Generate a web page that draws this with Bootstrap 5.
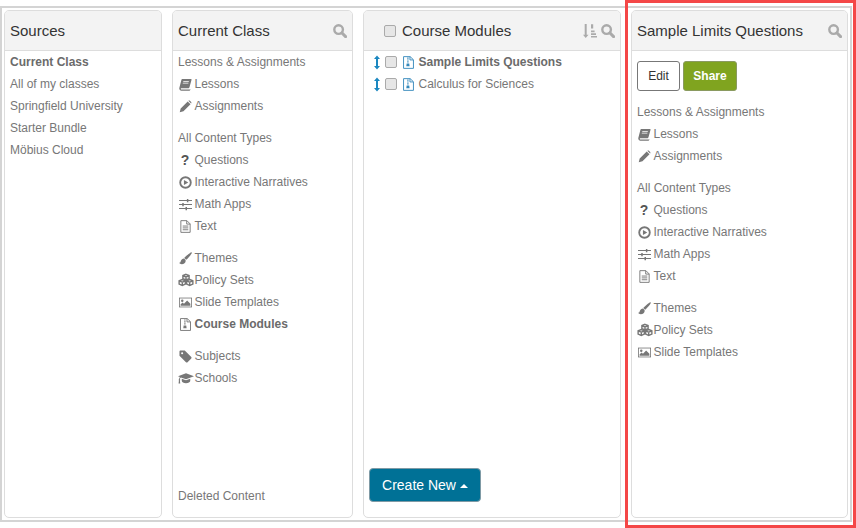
<!DOCTYPE html>
<html lang="en">
<head>
  <meta charset="UTF-8" />
  <title>Content Manager</title>
  <link href="https://cdn.jsdelivr.net/npm/bootstrap@5.3.0/dist/css/bootstrap.min.css" rel="stylesheet" />
  <style>
    html, body {
      height: 100%;
    }

    body {
      position: relative;
      background: #fff;
      font-family: "Liberation Sans", Arial, sans-serif;
      font-size: 12px;
      color: #777;
      overflow: hidden;
    }

    .frame {
      margin-top: 6px;
      width: 852px;
      height: 516px;
      border: 2px solid #d4d4d4;
      padding: 2px 1px 2px 2px;
      gap: 10px;
    }

    .pane {
      border: 1px solid #ddd;
      border-radius: 5px;
      height: 100%;
      flex: none;
    }

    .pane-sources { width: 158px; }
    .pane-class { width: 181px; }
    .pane-modules { width: 258px; }
    .pane-detail { width: 217px; }

    .pane-head {
      height: 40px;
      flex: none;
      padding: 1px 5px 0;
      background: #f3f3f3;
      border-bottom: 1px solid #ddd;
      border-radius: 4px 4px 0 0;
      font-size: 15px;
      color: #333;
    }

    .head-title {
      flex: 1;
      white-space: nowrap;
    }

    .ico-search {
      width: 14px;
      height: 14px;
      color: #aaa;
      flex: none;
    }

    .pane-body {
      flex: 1;
      padding: 0 5px;
      min-height: 0;
    }

    .nav-group {
      margin: 0 0 10px;
      padding: 0;
      list-style: none;
    }

    .nav-group li {
      height: 22px;
      line-height: 22px;
      white-space: nowrap;
      display: flex;
      align-items: center;
    }

    .slot {
      width: 16.5px;
      flex: none;
      display: flex;
      align-items: center;
    }

    .slot svg {
      width: 13px;
      height: 13px;
      margin-left: .5px;
      color: #777;
    }

    .slot.wide svg {
      width: 16px;
      height: 14px;
      margin-left: 0;
    }

    .qmark {
      width: 14px;
      text-align: center;
      font-weight: 700;
      font-size: 14px;
      color: #555;
    }

    .strong-row {
      font-weight: 700;
      color: #6b6b6b;
    }

    .chk {
      appearance: none;
      width: 12px;
      height: 12px;
      margin: 0;
      background-color: #e6e6e6;
      border: 1px solid #aaa;
      border-radius: 2px;
      flex: none;
    }

    .head-chk {
      margin: 0 6px 0 15px;
    }

    .drag-ico {
      width: 6px;
      height: 15px;
      color: #1b87c0;
      margin: 0 5.500px 0 4.500px;
      flex: none;
    }

    .mod-ico {
      width: 11px;
      height: 13px;
      margin: 0 4.500px 0 6px;
      color: #3388bb;
      flex: none;
    }

    .btn-make {
      width: 112px;
      height: 34px;
      padding: 0;
      background: #007196;
      border: 1px solid #7f9aa5;
      border-radius: 4px;
      color: #fff;
      font-size: 14px;
    }

    .make-wrap {
      padding: 0 0 15px;
    }

    .caret-up {
      display: inline-block;
      width: 0;
      height: 0;
      margin-left: 4px;
      vertical-align: 2px;
      border-left: 4px solid transparent;
      border-right: 4px solid transparent;
      border-bottom: 4px solid #fff;
    }

    .btn-edit, .btn-share {
      height: 30px;
      padding: 0;
      font-size: 12px;
      border-radius: 3px;
    }

    .btn-edit {
      width: 43px;
      background: #fff;
      border: 1px solid #777;
      color: #333;
    }

    .btn-share {
      width: 54px;
      background: #80a41f;
      border: 1px solid #8a9a60;
      color: #fff;
      font-weight: 700;
    }

    .actions {
      gap: 3px;
      padding: 10px 0;
    }

    .callout {
      position: absolute;
      left: 625px;
      top: 0;
      width: 231px;
      height: 528px;
      border: 3px solid #f44747;
      pointer-events: none;
    }
  </style>
</head>
<body>
  <svg width="0" height="0" class="position-absolute">
    <symbol id="i-search" viewBox="0 0 14 14">
      <circle cx="5.600" cy="5.600" r="4.300" fill="none" stroke="currentColor" stroke-width="2.400" />
      <path d="M9 9l3.600 3.600" stroke="currentColor" stroke-width="3" stroke-linecap="round" />
    </symbol>
    <symbol id="i-book" viewBox="0 0 14 14">
      <path fill="currentColor" d="M3.400 1H13l.6.7-2.400 8.600-.8.7H2.600c-.6 0-.8.5-.6 1 .1.300.4.500.8.500h8.700l.9-.5-.3 1-.7.6H2.500c-1 0-1.800-.7-2.100-1.700-.2-.6-.2-1 0-1.500L2.700 1.700z" />
      <path fill="#fff" d="M4.700 3.400h6l-.2.8h-6zM4.200 5.200h6l-.2.8h-6z" />
    </symbol>
    <symbol id="i-pencil" viewBox="0 0 14 14">
      <path fill="currentColor" d="M.8 13.200l1-4L9.400 1.600l3 3-7.600 7.600zM10.200.9c.5-.5 1.200-.5 1.600 0l1.300 1.300c.4.400.4 1.100 0 1.500l-.1.100-3-3z" />
    </symbol>
    <symbol id="i-play" viewBox="0 0 14 14">
      <circle cx="7" cy="7" r="5.700" fill="none" stroke="currentColor" stroke-width="2" />
      <path fill="currentColor" d="M5.300 4.200L10 7l-4.700 2.800z" />
    </symbol>
    <symbol id="i-sliders" viewBox="0 0 14 14">
      <path fill="currentColor" d="M0 2.200h14v1.100H0zM0 6.500h14v1.100H0zM0 10.800h14v1.100H0zM8.500 1h1.600v3.500H8.500zM3.500 5.300h1.600v3.500H3.500zM7 9.600h1.600v3.500H7z" />
    </symbol>
    <symbol id="i-file" viewBox="0 0 14 14">
      <path fill="none" stroke="currentColor" d="M2 .7h6.500L12 4.200v9.100H2zM8.300.9v3.500H12" />
      <path stroke="currentColor" d="M4 6.500h6M4 8.500h6M4 10.500h6" />
    </symbol>
    <symbol id="i-brush" viewBox="0 0 14 14">
      <path fill="currentColor" d="M13.500.4c.4.300.3.900-.1 1.500C11.800 4.300 9.500 7 7.800 8.400L5.600 6.400C7.200 4.600 10.200 2 12.300.7c.5-.3.900-.5 1.200-.3zM5 7c.9.200 1.900 1 2.200 2.100.2 2.300-1.900 4-4.200 4-1.200 0-2.400-.5-3-1.500.7.100 1.500-.2 1.700-1C2 9.200 3 7.400 5 7z" />
    </symbol>
    <symbol id="i-cubes" viewBox="0 0 17 14">
      <g fill="none" stroke="currentColor" stroke-width="1.500">
        <path d="M8.500 1l3.300 1.300v3.400L8.500 7 5.200 5.700V2.300zM5.200 2.500l3.300 1.300 3.300-1.300M8.500 3.800V7" />
        <path d="M4.600 6.500l3.200 1.300v3.600l-3.200 1.400-3.400-1.400V7.800zM1.200 8l3.400 1.300L7.800 8M4.600 9.300v3.500" />
        <path d="M12.400 6.500l3.400 1.300v3.600l-3.400 1.400-3.200-1.400V7.800zM9.200 8l3.200 1.300L15.800 8M12.400 9.300v3.500" />
      </g>
    </symbol>
    <symbol id="i-image" viewBox="0 0 16 14">
      <rect x=".5" y="1.500" width="15" height="11" fill="none" stroke="currentColor" />
      <circle cx="4" cy="4.800" r="1.500" fill="currentColor" />
      <path fill="currentColor" d="M2 11V9.300L4.500 7l1.600 1.500L10 4.500l4 4V11z" />
    </symbol>
    <symbol id="i-module" viewBox="0 0 12 14">
      <path fill="none" stroke="currentColor" d="M.6.600h7.200l3.600 3.400v9.400H.6zM7.600.8v3.400h3.600" />
      <path fill="currentColor" d="M4.600 1.500h1.500v1.300H4.600zM4.600 3.600h1.500v1.300H4.600zM4.600 5.700h1.500V7H4.600zM4 8h2.800l.4 3H3.600z" />
    </symbol>
    <symbol id="i-tag" viewBox="0 0 14 14">
      <path fill="currentColor" d="M.5 1.700C.5 1 1 .5 1.700.5h4.500l7 7c.5.500.5 1.200 0 1.700l-4 4c-.5.500-1.200.5-1.700 0l-7-7z" />
      <circle cx="3.400" cy="3.400" r="1.100" fill="#fff" />
    </symbol>
    <symbol id="i-cap" viewBox="0 0 17 14">
      <path fill="currentColor" d="M8.500 2L17 5.200 8.500 8.400 3 6.400c-.6.500-.9 1.200-1 2 .3.200.4.400.4.700s-.1.500-.4.600l.4 3.200H.6L1 9.700c-.2-.1-.3-.4-.3-.6 0-.3.100-.6.400-.7.100-1 .5-1.900 1-2.500L0 5.200zM4 7.700l4.500 1.700L13 7.700v2.500c0 1.100-2 2.300-4.500 2.300S4 11.300 4 10.200z" />
    </symbol>
    <symbol id="i-sort" viewBox="0 0 14 14">
      <path fill="currentColor" d="M1.700 0h2v10.800h1.800L2.700 14 0 10.800h1.700zM8 .2h2.200v4.400H8zM8 6.600h3.600v1.600H8zM8 9.300h5v1.600H8zM8 12h6v1.600H8z" />
    </symbol>
    <symbol id="i-drag" viewBox="0 0 6 14">
      <path fill="currentColor" d="M3 0l3 3.400H4V10.600h2L3 14 0 10.600h2V3.400H0z" />
    </symbol>
  </svg>

  <div class="frame d-flex">
    <section class="pane pane-sources d-flex flex-column">
      <header class="pane-head d-flex align-items-center">
        <span class="head-title">Sources</span>
      </header>
      <div class="pane-body">
        <ul class="nav-group">
          <li class="strong-row">Current Class</li>
          <li>All of my classes</li>
          <li>Springfield University</li>
          <li>Starter Bundle</li>
          <li>Möbius Cloud</li>
        </ul>
      </div>
    </section>

    <section class="pane pane-class d-flex flex-column">
      <header class="pane-head d-flex align-items-center">
        <span class="head-title">Current Class</span>
        <svg class="ico-search"><use href="#i-search" /></svg>
      </header>
      <div class="pane-body d-flex flex-column">
        <ul class="nav-group">
          <li>Lessons &amp; Assignments</li>
          <li><span class="slot"><svg><use href="#i-book" /></svg></span>Lessons</li>
          <li><span class="slot"><svg><use href="#i-pencil" /></svg></span>Assignments</li>
        </ul>
        <ul class="nav-group">
          <li>All Content Types</li>
          <li><span class="slot"><span class="qmark">?</span></span>Questions</li>
          <li><span class="slot"><svg><use href="#i-play" /></svg></span>Interactive Narratives</li>
          <li><span class="slot"><svg><use href="#i-sliders" /></svg></span>Math Apps</li>
          <li><span class="slot"><svg><use href="#i-file" /></svg></span>Text</li>
        </ul>
        <ul class="nav-group">
          <li><span class="slot"><svg><use href="#i-brush" /></svg></span>Themes</li>
          <li><span class="slot wide"><svg><use href="#i-cubes" /></svg></span>Policy Sets</li>
          <li><span class="slot"><svg><use href="#i-image" /></svg></span>Slide Templates</li>
          <li class="strong-row"><span class="slot"><svg><use href="#i-module" /></svg></span>Course Modules</li>
        </ul>
        <ul class="nav-group">
          <li><span class="slot"><svg><use href="#i-tag" /></svg></span>Subjects</li>
          <li><span class="slot wide"><svg><use href="#i-cap" /></svg></span>Schools</li>
        </ul>
        <ul class="nav-group mt-auto">
          <li>Deleted Content</li>
        </ul>
      </div>
    </section>

    <section class="pane pane-modules d-flex flex-column">
      <header class="pane-head d-flex align-items-center">
        <input type="checkbox" class="chk head-chk" aria-label="Select all" />
        <span class="head-title">Course Modules</span>
        <svg class="ico-search me-1"><use href="#i-sort" /></svg>
        <svg class="ico-search"><use href="#i-search" /></svg>
      </header>
      <div class="pane-body d-flex flex-column">
        <ul class="nav-group">
          <li class="strong-row">
            <svg class="drag-ico"><use href="#i-drag" /></svg>
            <input type="checkbox" class="chk" aria-label="Sample Limits Questions" />
            <svg class="mod-ico"><use href="#i-module" /></svg>
            Sample Limits Questions
          </li>
          <li>
            <svg class="drag-ico"><use href="#i-drag" /></svg>
            <input type="checkbox" class="chk" aria-label="Calculus for Sciences" />
            <svg class="mod-ico"><use href="#i-module" /></svg>
            Calculus for Sciences
          </li>
        </ul>
        <div class="make-wrap mt-auto">
          <button type="button" class="btn btn-make">Create New<span class="caret-up"></span></button>
        </div>
      </div>
    </section>

    <section class="pane pane-detail d-flex flex-column">
      <header class="pane-head d-flex align-items-center">
        <span class="head-title">Sample Limits Questions</span>
        <svg class="ico-search"><use href="#i-search" /></svg>
      </header>
      <div class="pane-body">
        <div class="actions d-flex">
          <button type="button" class="btn btn-edit">Edit</button>
          <button type="button" class="btn btn-share">Share</button>
        </div>
        <ul class="nav-group">
          <li>Lessons &amp; Assignments</li>
          <li><span class="slot"><svg><use href="#i-book" /></svg></span>Lessons</li>
          <li><span class="slot"><svg><use href="#i-pencil" /></svg></span>Assignments</li>
        </ul>
        <ul class="nav-group">
          <li>All Content Types</li>
          <li><span class="slot"><span class="qmark">?</span></span>Questions</li>
          <li><span class="slot"><svg><use href="#i-play" /></svg></span>Interactive Narratives</li>
          <li><span class="slot"><svg><use href="#i-sliders" /></svg></span>Math Apps</li>
          <li><span class="slot"><svg><use href="#i-file" /></svg></span>Text</li>
        </ul>
        <ul class="nav-group">
          <li><span class="slot"><svg><use href="#i-brush" /></svg></span>Themes</li>
          <li><span class="slot wide"><svg><use href="#i-cubes" /></svg></span>Policy Sets</li>
          <li><span class="slot"><svg><use href="#i-image" /></svg></span>Slide Templates</li>
        </ul>
      </div>
    </section>
  </div>

  <div class="callout"></div>

  <script src="https://cdn.jsdelivr.net/npm/bootstrap@5.3.0/dist/js/bootstrap.bundle.min.js"></script>
</body>
</html>
